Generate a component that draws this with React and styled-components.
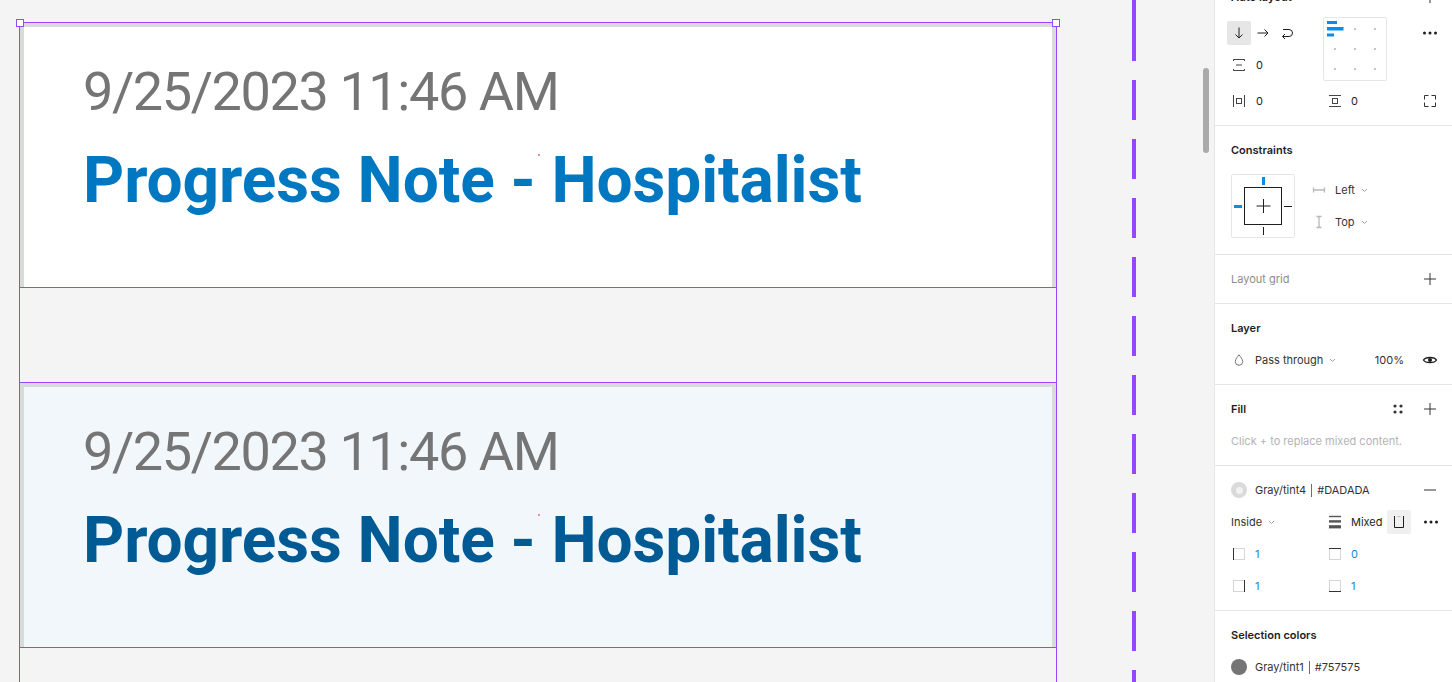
import React from 'react';
import styled, { createGlobalStyle } from 'styled-components';

const GlobalStyle = createGlobalStyle`
  * { box-sizing: border-box; }
  html, body { margin: 0; padding: 0; overflow: hidden; background: #f4f4f4; }
`;

const PURPLE = '#9747ff';
const BLUE = '#0c8ce9';

const notes = [
  { id: 1, date: '9/25/2023 11:46 AM', title: 'Progress Note - Hospitalist', hovered: false },
  { id: 2, date: '9/25/2023 11:46 AM', title: 'Progress Note - Hospitalist', hovered: true },
];

/* ---------- icons ---------- */

const Svg = ({ w = 16, h = 16, children }) => (
  <svg width={w} height={h} viewBox={`0 0 ${w} ${h}`} fill="none">
    {children}
  </svg>
);

const ArrowDown = () => (
  <Svg>
    <path d="M8 2.5v10.5M4.5 9.5L8 13l3.5-3.5" stroke="#1e1e1e" strokeWidth="1" />
  </Svg>
);

const ArrowRight = () => (
  <Svg>
    <path d="M2.5 8h10.5M9.5 4.5L13 8l-3.5 3.5" stroke="#1e1e1e" strokeWidth="1" />
  </Svg>
);

const WrapIcon = () => (
  <Svg>
    <path d="M4 4.5h6a3.5 3.5 0 0 1 0 7H3.5M6 9l-2.5 2.5L6 14" stroke="#1e1e1e" strokeWidth="1" />
  </Svg>
);

const GapIcon = () => (
  <Svg>
    <path d="M2.5 4v-1.5h11V4M2.5 12v1.5h11V12M5 8h6" stroke="#444" strokeWidth="1" />
  </Svg>
);

const PadHIcon = () => (
  <Svg>
    <path d="M2.5 2v12M13.5 2v12" stroke="#444" strokeWidth="1" />
    <rect x="5.5" y="5.5" width="5" height="5" stroke="#444" strokeWidth="1" />
  </Svg>
);

const PadVIcon = () => (
  <Svg>
    <path d="M2 2.5h12M2 13.5h12" stroke="#444" strokeWidth="1" />
    <rect x="5.5" y="5.5" width="5" height="5" stroke="#444" strokeWidth="1" />
  </Svg>
);

const ResizeIcon = () => (
  <Svg>
    <path d="M2.5 6.5v-4h4M9.5 2.5h4v4M13.5 9.5v4h-4M6.5 13.5h-4v-4" stroke="#333" strokeWidth="1" />
  </Svg>
);

const DotsIcon = () => (
  <Svg>
    <circle cx="2.5" cy="8" r="1.5" fill="#1e1e1e" />
    <circle cx="8" cy="8" r="1.5" fill="#1e1e1e" />
    <circle cx="13.5" cy="8" r="1.5" fill="#1e1e1e" />
  </Svg>
);

const PlusIcon = () => (
  <Svg>
    <path d="M8 2v12M2 8h12" stroke="#333" strokeWidth="1" />
  </Svg>
);

const MinusIcon = () => (
  <Svg>
    <path d="M2 8h12" stroke="#333" strokeWidth="1" />
  </Svg>
);

const StyleIcon = () => (
  <Svg>
    <circle cx="5" cy="5" r="1.6" fill="#333" />
    <circle cx="11" cy="5" r="1.6" fill="#333" />
    <circle cx="5" cy="11" r="1.6" fill="#333" />
    <circle cx="11" cy="11" r="1.6" fill="#333" />
  </Svg>
);

const DropIcon = () => (
  <Svg>
    <path d="M8 2.8C6.5 4.8 4.3 7.4 4.3 9.6a3.7 3.7 0 0 0 7.4 0C11.7 7.4 9.5 4.8 8 2.8z" stroke="#777" strokeWidth="1" />
  </Svg>
);

const EyeIcon = () => (
  <Svg>
    <path d="M1.5 8C3.5 4.6 12.5 4.6 14.5 8C12.5 11.4 3.5 11.4 1.5 8z" stroke="#1e1e1e" strokeWidth="1.4" />
    <circle cx="8" cy="8" r="2" fill="#1e1e1e" />
  </Svg>
);

const Chevron = () => (
  <svg width="7" height="5" viewBox="0 0 7 5" fill="none">
    <path d="M1 1l2.5 2.5L6 1" stroke="#a0a0a0" strokeWidth="1" />
  </svg>
);

const HConstraintIcon = () => (
  <Svg>
    <path d="M2.5 5.5v5M13.5 5.5v5M2.5 8h11" stroke="#b8b8b8" strokeWidth="1.3" />
  </Svg>
);

const VConstraintIcon = () => (
  <Svg>
    <path d="M5.5 2.5h5M5.5 13.5h5M8 2.5v11" stroke="#b8b8b8" strokeWidth="1.3" />
  </Svg>
);

const StrokeWeightIcon = () => (
  <Svg>
    <rect x="2" y="1.8" width="12" height="1.4" fill="#555" />
    <rect x="2" y="6.2" width="12" height="2.4" fill="#555" />
    <rect x="2" y="11.2" width="12" height="3.2" fill="#555" />
  </Svg>
);

const IndividualStrokeIcon = () => (
  <Svg>
    <path d="M6.5 2.5h3" stroke="#bbb" strokeWidth="1" />
    <path d="M3.5 2v11.5h9V2" stroke="#1e1e1e" strokeWidth="1" />
  </Svg>
);

const SideIcon = ({ side }) => {
  const dark = {
    left: 'M2.5 2v12',
    top: 'M2 2.5h12',
    right: 'M13.5 2v12',
    bottom: 'M2 13.5h12',
  }[side];
  return (
    <Svg>
      <rect x="2.5" y="2.5" width="11" height="11" stroke="#d6d6d6" strokeWidth="1" />
      <path d={dark} stroke="#333" strokeWidth="1" />
    </Svg>
  );
};

const AlignmentGrid = () => {
  const dots = [];
  [12, 32, 52].forEach((y) =>
    [12, 32, 52].forEach((x) => {
      if (!(x === 12 && y === 12)) dots.push(<rect key={`${x}-${y}`} x={x - 1} y={y - 1} width="2" height="2" fill="#c4c4c4" />);
    })
  );
  return (
    <svg width="62" height="62" viewBox="1 1 62 62">
      <rect x="4" y="4" width="10" height="3" fill={BLUE} />
      <rect x="4" y="10" width="16.5" height="3.5" fill={BLUE} />
      <rect x="4" y="16.5" width="7" height="3" fill={BLUE} />
      {dots}
    </svg>
  );
};

const ConstraintDrawing = () => (
  <svg width="62" height="62" viewBox="1 1 62 62">
    <rect x="13.5" y="13.5" width="37" height="37" stroke="#1e1e1e" strokeWidth="1" fill="none" />
    <path d="M25.5 32h14M32.5 25v14" stroke="#1e1e1e" strokeWidth="1" />
    <rect x="31" y="3" width="3" height="8" fill={BLUE} />
    <rect x="3" y="31" width="8" height="3" fill={BLUE} />
    <path d="M53 32.5h8M32.5 53v8" stroke="#1e1e1e" strokeWidth="1" />
  </svg>
);

/* ---------- canvas ---------- */

const Layout = styled.div`
  display: flex;
  height: 682px;
  overflow: hidden;
`;

const Canvas = styled.main`
  position: relative;
  flex: 1;
  display: flex;
  align-items: stretch;
  padding-left: 19px;
  background: #f4f4f4;
  overflow: hidden;
`;

const Frame = styled.div`
  position: relative;
  width: 1038px;
  margin-top: 22px;
  display: flex;
  flex-direction: column;
  border-left: 1px solid ${PURPLE};
  border-right: 1px solid ${PURPLE};
`;

const Handle = styled.span`
  position: absolute;
  top: -3px;
  ${(p) => (p.$side === 'left' ? 'left: -4px;' : 'right: -4px;')}
  width: 8px;
  height: 8px;
  background: #fff;
  border: 1px solid ${PURPLE};
  z-index: 2;
`;

const NoteCard = styled.article`
  border-top: 1px solid ${PURPLE};
  border-bottom: 1px solid ${PURPLE};
`;

const NoteInner = styled.div`
  position: relative;
  height: 264px;
  padding: 38px 0 0 59px;
  background: ${(p) => (p.$hovered ? '#f2f7fc' : '#ffffff')};
  border: 4px solid #dadada;
  border-bottom: 0;
  font-family: Roboto, 'Liberation Sans', sans-serif;
`;

const NoteDate = styled.div`
  font-size: 54px;
  line-height: 54px;
  letter-spacing: -1.4px;
  color: #757575;
`;

const NoteTitle = styled.div`
  margin-top: 30px;
  font-size: 64px;
  line-height: 64px;
  font-weight: 700;
  letter-spacing: -0.1px;
  color: ${(p) => (p.$hovered ? '#005a93' : '#0078c1')};
`;

const CaretDot = styled.span`
  position: absolute;
  left: 514px;
  top: 127px;
  width: 2px;
  height: 2px;
  background: #f27ecf;
`;

const FrameGap = styled.div`
  height: 94px;
  flex: ${(p) => (p.$fill ? 1 : 'none')};
`;

const DashedGuide = styled.div`
  width: 4px;
  margin-left: 75px;
  background-image: repeating-linear-gradient(
    to bottom,
    ${PURPLE} 0px,
    ${PURPLE} 40px,
    transparent 40px,
    transparent 59px
  );
  background-position: 0 21px;
`;

const Scrollbar = styled.div`
  position: absolute;
  right: 5px;
  top: 68px;
  width: 6px;
  height: 85px;
  border-radius: 3px;
  background: #aaaaaa;
`;

/* ---------- properties panel ---------- */

const Panel = styled.aside`
  width: 238px;
  flex: none;
  background: #fff;
  border-left: 1px solid #e6e6e6;
  overflow: hidden;
  font-family: Inter, 'Liberation Sans', sans-serif;
  font-size: 11px;
  color: #333;
`;

const PanelScroll = styled.div`
  margin-top: -27px;
`;

const Section = styled.section`
  padding: 8px 6px 8px 12px;
  border-bottom: 1px solid #e6e6e6;
`;

const Row = styled.div`
  display: flex;
  align-items: center;
  height: 32px;
`;

const SectionTitle = styled(Row)`
  padding-left: 4px;
  font-weight: ${(p) => (p.$muted ? 400 : 600)};
  color: ${(p) => (p.$muted ? '#8c8c8c' : '#1e1e1e')};
`;

const Actions = styled.div`
  display: flex;
  margin-left: auto;
  align-self: flex-start;
`;

const ActionCell = styled.div`
  width: 32px;
  height: 32px;
  display: flex;
  align-items: center;
  justify-content: center;
`;

const ActionButton = styled.div`
  width: 24px;
  height: 24px;
  display: flex;
  align-items: center;
  justify-content: center;
  border-radius: 2px;
  background: ${(p) => (p.$active ? '#f0f0f0' : 'transparent')};
`;

const IconCell = styled.div`
  width: 24px;
  height: 24px;
  flex: none;
  display: flex;
  align-items: center;
  justify-content: center;
  border-radius: 2px;
  background: ${(p) => (p.$active ? '#e6e6e6' : 'transparent')};
  margin-right: ${(p) => p.$gap || 0}px;
`;

const Column = styled.div`
  display: flex;
  align-items: center;
  width: ${(p) => p.$width || 96}px;
  flex: none;
`;

const Value = styled.span`
  color: ${(p) => (p.$accent ? '#1a86d4' : '#1e1e1e')};
`;

const Label = styled.span`
  display: inline-flex;
  align-items: center;
  gap: 6px;
  color: #333;
  padding-left: ${(p) => p.$indent || 0}px;
`;

const Hint = styled(Row)`
  padding-left: 4px;
  color: #b3b3b3;
`;

const AutoGrid = styled.div`
  display: flex;
  margin-top: 4px;
`;

const Stack = styled.div`
  display: flex;
  flex-direction: column;
`;

const GridBox = styled.div`
  width: 64px;
  height: 64px;
  flex: none;
  margin-left: ${(p) => p.$offset || 0}px;
  border: 1px solid #e6e6e6;
  border-radius: 2px;
`;

const PaddingRow = styled(Row)`
  margin-top: 4px;
`;

const ConstraintBody = styled.div`
  display: flex;
  padding: 8px 0 8px 4px;
`;

const ConstraintOptions = styled.div`
  display: flex;
  flex-direction: column;
  margin-left: 12px;
`;

const Percent = styled.span`
  margin-left: auto;
  margin-right: 10px;
  color: #333;
`;

const Swatch = styled.span`
  width: 16px;
  height: 16px;
  border-radius: 50%;
  background: ${(p) => p.$color};
  display: flex;
  align-items: center;
  justify-content: center;
  &::after {
    content: '';
    display: ${(p) => (p.$ring ? 'block' : 'none')};
    width: 7px;
    height: 7px;
    border-radius: 50%;
    background: #f2f2f2;
  }
`;

const StyleName = styled.span`
  display: inline-flex;
  align-items: center;
  color: #333;
`;

const Divider = styled.span`
  width: 1px;
  height: 13px;
  margin: 0 5px;
  background: #7a6a62;
`;

const ColorRow = ({ name, hex, ring, action }) => (
  <Row>
    <IconCell $gap={4}>
      <Swatch $color={hex} $ring={ring} />
    </IconCell>
    <StyleName>
      {name}
      <Divider />
      {hex.toUpperCase()}
    </StyleName>
    {action && (
      <Actions>
        <ActionCell>{action}</ActionCell>
      </Actions>
    )}
  </Row>
);

const PropertiesPanel = () => (
  <Panel>
    <PanelScroll>
      <Section>
        <SectionTitle>
          Auto layout
          <Actions>
            <ActionCell>
              <PlusIcon />
            </ActionCell>
          </Actions>
        </SectionTitle>
        <AutoGrid>
          <Stack>
            <Row>
              <IconCell $active>
                <ArrowDown />
              </IconCell>
              <IconCell>
                <ArrowRight />
              </IconCell>
              <IconCell>
                <WrapIcon />
              </IconCell>
            </Row>
            <Row>
              <IconCell $gap={5}>
                <GapIcon />
              </IconCell>
              <Value>0</Value>
            </Row>
          </Stack>
          <GridBox $offset={24}>
            <AlignmentGrid />
          </GridBox>
          <Actions>
            <ActionCell>
              <DotsIcon />
            </ActionCell>
          </Actions>
        </AutoGrid>
        <PaddingRow>
          <Column>
            <IconCell $gap={5}>
              <PadHIcon />
            </IconCell>
            <Value>0</Value>
          </Column>
          <Column $width={60}>
            <IconCell $gap={4}>
              <PadVIcon />
            </IconCell>
            <Value>0</Value>
          </Column>
          <Actions>
            <ActionCell>
              <ResizeIcon />
            </ActionCell>
          </Actions>
        </PaddingRow>
      </Section>

      <Section>
        <SectionTitle>Constraints</SectionTitle>
        <ConstraintBody>
          <GridBox>
            <ConstraintDrawing />
          </GridBox>
          <ConstraintOptions>
            <Row>
              <IconCell $gap={4}>
                <HConstraintIcon />
              </IconCell>
              <Label>
                Left <Chevron />
              </Label>
            </Row>
            <Row>
              <IconCell $gap={4}>
                <VConstraintIcon />
              </IconCell>
              <Label>
                Top <Chevron />
              </Label>
            </Row>
          </ConstraintOptions>
        </ConstraintBody>
      </Section>

      <Section>
        <SectionTitle $muted>
          Layout grid
          <Actions>
            <ActionCell>
              <PlusIcon />
            </ActionCell>
          </Actions>
        </SectionTitle>
      </Section>

      <Section>
        <SectionTitle>Layer</SectionTitle>
        <Row>
          <IconCell $gap={4}>
            <DropIcon />
          </IconCell>
          <Label>
            Pass through <Chevron />
          </Label>
          <Percent>100%</Percent>
          <ActionCell>
            <EyeIcon />
          </ActionCell>
        </Row>
      </Section>

      <Section>
        <SectionTitle>
          Fill
          <Actions>
            <ActionCell>
              <StyleIcon />
            </ActionCell>
            <ActionCell>
              <PlusIcon />
            </ActionCell>
          </Actions>
        </SectionTitle>
        <Hint>Click + to replace mixed content.</Hint>
      </Section>

      <Section>
        <ColorRow name="Gray/tint4" hex="#dadada" ring action={<MinusIcon />} />
        <Row>
          <Column>
            <Label $indent={4}>
              Inside <Chevron />
            </Label>
          </Column>
          <IconCell $gap={4}>
            <StrokeWeightIcon />
          </IconCell>
          <Value>Mixed</Value>
          <Actions>
            <ActionCell>
              <ActionButton $active>
                <IndividualStrokeIcon />
              </ActionButton>
            </ActionCell>
            <ActionCell>
              <DotsIcon />
            </ActionCell>
          </Actions>
        </Row>
        <Row>
          <Column>
            <IconCell $gap={4}>
              <SideIcon side="left" />
            </IconCell>
            <Value $accent>1</Value>
          </Column>
          <IconCell $gap={4}>
            <SideIcon side="top" />
          </IconCell>
          <Value $accent>0</Value>
        </Row>
        <Row>
          <Column>
            <IconCell $gap={4}>
              <SideIcon side="right" />
            </IconCell>
            <Value $accent>1</Value>
          </Column>
          <IconCell $gap={4}>
            <SideIcon side="bottom" />
          </IconCell>
          <Value $accent>1</Value>
        </Row>
      </Section>

      <Section>
        <SectionTitle>Selection colors</SectionTitle>
        <ColorRow name="Gray/tint1" hex="#757575" />
      </Section>
    </PanelScroll>
  </Panel>
);

const App = () => (
  <>
    <GlobalStyle />
    <Layout>
      <Canvas>
        <Frame>
          <Handle $side="left" />
          <Handle $side="right" />
          {notes.map((note, i) => (
            <React.Fragment key={note.id}>
              {i > 0 && <FrameGap />}
              <NoteCard>
                <NoteInner $hovered={note.hovered}>
                  <NoteDate>{note.date}</NoteDate>
                  <NoteTitle $hovered={note.hovered}>{note.title}</NoteTitle>
                  <CaretDot />
                </NoteInner>
              </NoteCard>
            </React.Fragment>
          ))}
          <FrameGap $fill />
        </Frame>
        <DashedGuide />
        <Scrollbar />
      </Canvas>
      <PropertiesPanel />
    </Layout>
  </>
);

export default App;
